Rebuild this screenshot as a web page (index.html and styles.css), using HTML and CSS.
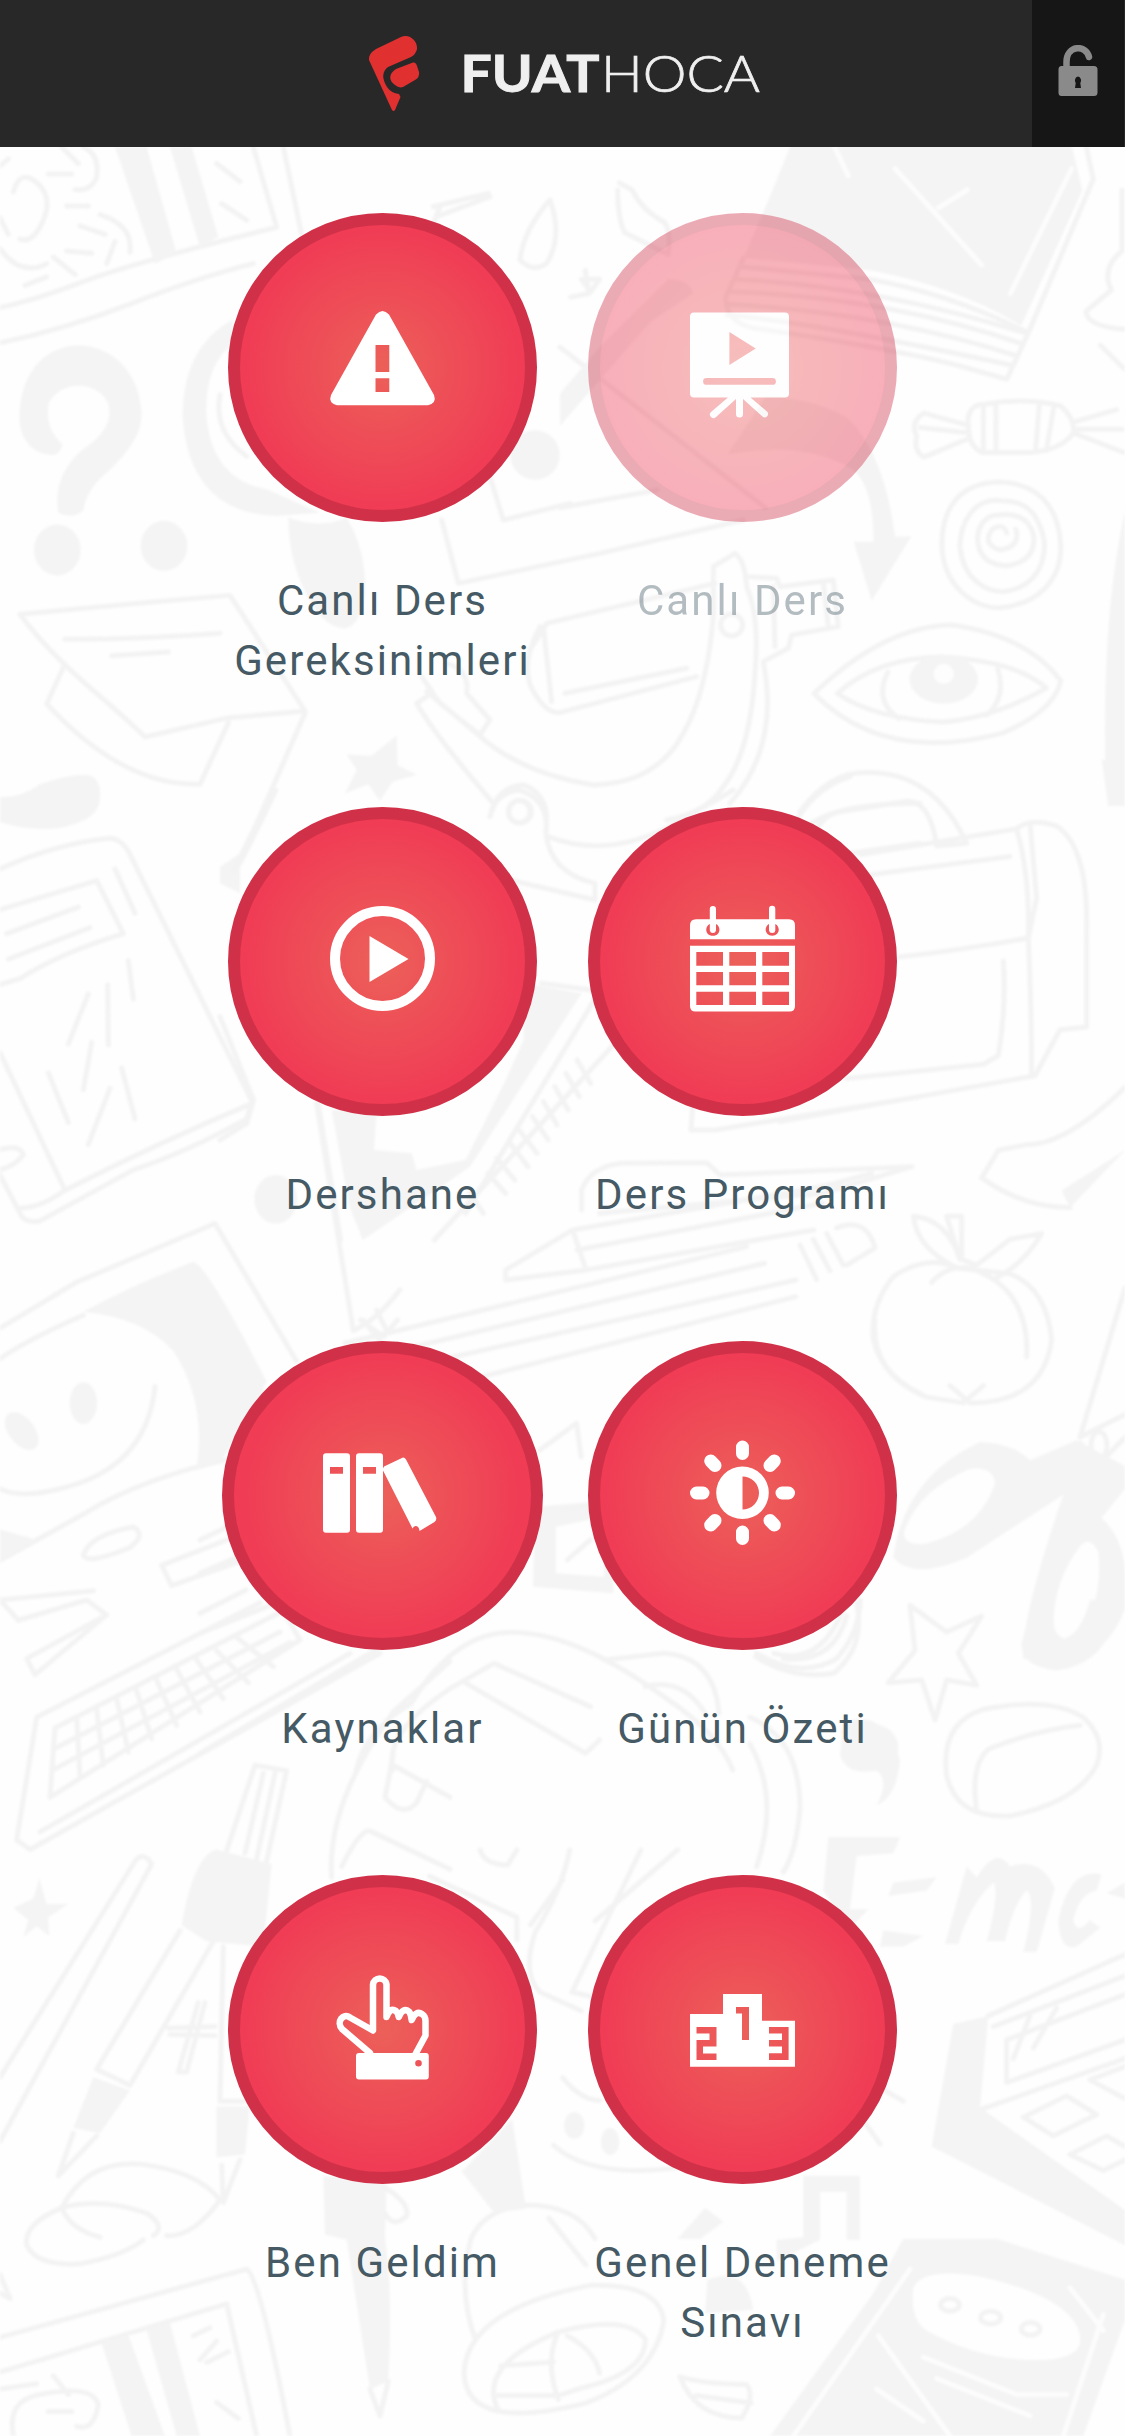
FILE: index.html
```html
<!DOCTYPE html>
<html lang="tr">
<head>
<meta charset="utf-8">
<title>Fuat Hoca</title>
<link rel="stylesheet" href="styles.css">
</head>
<body>
<svg class="doodles" viewBox="0 0 1125 2436" aria-hidden="true">
  <!-- shelf board, question mark, magnifier, paper boat -->
  <g transform="translate(0 140) scale(.3333 .4719)">
    <path d="M0 355Q100 340 250 300T830 185L760 15M850 15L905 200M0 430Q200 400 400 345T760 262M40 110Q60 60 110 90T130 170Q100 220 60 210M250 15Q300 30 290 80Q270 110 225 105M0 165L25 200M0 230Q60 290 140 262M145 72H215M200 140H265M240 182L315 200M200 235L275 240M345 215L320 262M160 248L225 285M75 308L140 290M300 158Q400 180 390 238M185 15L235 50M650 50L720 88M665 135L740 170M0 55L25 40"/>
    <path class="solid" d="M345 15H440L530 240L465 262ZM510 15H575L655 205L600 228Z"/>
    <path class="solid" d="M58 590C60 480 150 435 240 435C350 440 420 500 425 580C425 640 350 685 290 725Q255 755 250 785Q215 805 175 790C160 730 200 680 260 650C320 620 335 590 325 560C300 510 180 505 145 560C140 595 150 620 188 645Q180 665 160 668C90 665 60 630 58 590Z"/>
    <ellipse class="solid" cx="172" cy="869" rx="70" ry="54"/><ellipse class="solid" cx="492" cy="860" rx="70" ry="53"/>
    <path class="solid" d="M700 380Q545 440 548 590Q570 790 830 797L960 790L800 740Q640 720 620 590Q610 480 700 430ZM865 800Q960 825 1040 800Q1100 870 1095 960Q1080 1035 1030 1035Q960 1030 910 950Q865 880 865 800Z"/>
    <path d="M660 540Q640 620 740 670M60 1005L440 980L690 965L915 1210L680 1225L435 1265C330 1190 180 1120 60 1005ZM195 1110L140 1195Q370 1370 600 1365L685 1235M195 1058Q430 1058 660 1045M335 1093L505 1085M915 1215L720 1530"/>
    <path class="solid" d="M0 1392Q60 1395 120 1365Q200 1345 260 1345Q305 1350 300 1395Q280 1445 180 1458Q80 1465 0 1445ZM1040 1302L1115 1305L1190 1262L1193 1325L1250 1345L1178 1360L1140 1400L1105 1365L1035 1385L1070 1335Z"/>
  </g>
  <!-- book stack, brush, candy, lollipop, eye -->
  <g transform="translate(560 190) scale(.3603 .3571)">
    <path class="solid" d="M640 -125H1420L1450 0L1280 380Q1100 270 860 225L510 190L590 0Z"/>
    <path class="light" d="M930 -60L1170 210M1420 -60L1250 290M1050 50L1130 0M760 -125L800 -40"/>
    <path d="M510 190L460 300Q460 380 560 390Q900 440 1100 490L1240 530L1300 400Q1080 290 860 250L500 215M490 250Q880 270 1290 400M475 285Q900 300 1280 430M470 320Q900 345 1270 465M465 350Q700 370 1250 490M1300 400L1480 -30L1460 -125M160 0Q160 80 180 120L300 180Q310 120 290 90Q230 60 200 0L165 -20M0 440L570 890M70 225L80 290L30 300M60 250H110L85 285Z"/>
    <path class="solid" d="M0 660L250 370L370 290Q360 250 300 250L110 440L0 570ZM465 740L570 580Q700 580 800 640Q900 740 930 970H975L865 1150L815 985H870Q870 840 820 790Q700 700 465 740Z"/>
    <path d="M1135 680Q1120 600 1180 600Q1290 580 1390 605Q1430 640 1425 680Q1390 730 1300 735H1170Q1140 720 1135 680ZM1135 660L1010 625Q970 650 990 690Q980 730 1010 748L1135 695M1000 665L1130 680M1425 650L1545 615M1425 680L1565 735M1430 670H1560M1175 605V730M1210 605V730M1330 605L1320 730M1370 610L1350 730"/>
    <path d="M1220 818C1110 820 1060 890 1060 990C1060 1110 1150 1170 1220 1170C1330 1160 1390 1090 1390 1000C1385 880 1320 820 1220 818ZM1225 870C1150 860 1110 930 1110 1000C1120 1090 1180 1125 1230 1125C1310 1115 1345 1060 1345 990C1330 900 1290 870 1225 870ZM1215 910C1170 910 1155 960 1160 990Q1170 1050 1240 1052Q1320 1040 1315 970Q1300 900 1215 910ZM1240 960Q1230 930 1200 950Q1170 990 1220 1008Q1280 1000 1265 950"/>
    <path d="M705 1410Q900 1220 1090 1218Q1300 1250 1390 1375Q1370 1460 1230 1520Q900 1610 705 1410ZM770 1410Q880 1310 1060 1308Q1270 1320 1350 1395Q1200 1480 1060 1490Q870 1480 770 1410ZM910 1350Q870 1430 940 1480M1215 1340Q1240 1420 1185 1470"/>
    <ellipse class="solid" cx="1065" cy="1370" rx="95" ry="68"/><circle class="paper" cx="1065" cy="1355" r="28"/>
    <path d="M0 890L270 840M1560 0V170Q1500 220 1530 280L1460 340Q1460 380 1565 390M1500 435L1565 500"/>
    <path class="solid" d="M1568 900V1678H1515Q1500 1200 1568 900Z"/>
  </g>
  <!-- bag strap and satchel clasp -->
  <g transform="translate(330 520) scale(.3333)">
    <path d="M335 0L385 190L810 100L1240 0M600 390L650 310Q900 250 1155 190M630 320Q560 450 620 530Q660 590 700 575L1100 470M640 320L665 545M705 520L1070 445M1150 195V140L1215 100Q1245 120 1250 200Q1290 290 1275 460Q1260 700 1180 800Q1130 880 1010 900M1150 190V290Q1130 520 1060 640Q980 790 790 795Q570 760 440 640L290 515M290 530L260 550Q310 640 490 850M275 470L330 550L450 645L480 600L410 520Q420 450 350 430M1260 170L1340 175L1350 200L1510 180L1525 320L1385 345L1375 385L1300 425Q1350 680 1200 850M1330 200L1335 380M1480 185L1495 320M480 890Q500 800 580 795Q650 820 650 900M1400 900Q1460 800 1560 770"/>
    <circle cx="1205" cy="315" r="33"/><circle cx="570" cy="875" r="34"/>
    <circle class="solid" cx="615" cy="-195" r="74"/>
    <path d="M480 -130L520 0L720 -50M310 -940L475 -980M310 -890L330 -940M320 -910L480 -970M570 -780Q580 -870 660 -960Q700 -850 650 -770Q610 -740 570 -780"/>
  </g>
  <!-- set square, ruler and pencils -->
  <g transform="translate(220 790) scale(.4464 .3333)">
    <path d="M125 0Q80 130 40 230M610 60Q620 10 670 0Q740 30 730 130Q740 250 840 280V330L650 270M735 140Q870 210 1020 100L1150 0M220 940L270 1350M720 580L830 600M960 650L480 1350M870 560L550 1270M1060 930L1055 1020H1110L1568 920M1310 120Q1360 40 1568 40M0 680L75 930L60 1000L0 1050M1360 200L1568 160"/>
    <path d="M650 1060L690 1130M700 980L735 1050M750 890L780 960M600 1150L640 1210M800 810L830 880M560 1210L590 1270M620 1105L660 1170M670 1020L710 1090M725 935L755 1005M775 850L805 920"/>
    <path d="M810 1260V1200Q830 1130 900 1120L1090 1118L1120 1155L1550 1130L1350 1210L850 1270M640 1440L790 1320L820 1440L640 1470ZM790 1320L1390 1180M820 1440L1330 1320M800 1380L1350 1240M1350 1190L1460 1150"/>
    <path d="M280 1660L1180 1370M310 1710L1220 1420M360 1750L1290 1470M500 1790L1290 1520"/>
    <path class="solid" d="M250 960H420L350 980L345 1080L430 1090L440 1140L550 1110L640 870L680 750V580L810 610L560 1130L320 1350L290 1250Z"/>
    <ellipse class="solid" cx="125" cy="1228" rx="48" ry="73"/><path class="solid" d="M0 230L45 190V310L0 280Z"/>
    <ellipse cx="670" cy="65" rx="24" ry="33"/>
  </g>
  <!-- notebook and computer screen -->
  <g transform="translate(0 800) scale(.3333 .5102)">
    <path class="solid" d="M0 0H300Q290 50 140 55Q60 55 0 42Z"/>
    <path d="M0 135Q170 85 330 75Q360 75 385 100L755 590L740 625Q560 690 400 725L120 825Q70 830 60 810L0 735M755 595Q480 670 195 765L0 495M195 765Q120 800 60 800M0 215L290 158L370 262Q180 300 60 350L0 362M20 262L235 210M25 312L270 250M345 135L405 222M385 315L400 390M265 380L205 478M323 362L325 480M275 475L250 568M145 535L205 632M365 525L405 625M330 565L265 675M0 685Q60 675 70 695Q50 715 0 725M805 0L700 140M0 1035L230 945L645 830L890 1100M0 1095Q90 1055 250 1010M0 1350Q60 1370 180 1350Q440 1310 465 1150M0 1490L250 1400Q420 1330 700 1290M250 1480Q270 1440 400 1425Q440 1440 390 1465Q260 1500 250 1480ZM700 1445L485 1500L515 1540L730 1490M0 1568L280 1550"/>
    <path class="solid" d="M250 1003Q400 950 580 905Q620 910 800 1140L670 1290L590 1310Q620 1180 520 1080Q430 1015 250 1003ZM0 1430L110 1450L0 1490Z"/>
    <circle class="solid" cx="250" cy="1182" r="41"/><ellipse class="solid" cx="65" cy="1237" rx="55" ry="30" transform="rotate(28 65 1237)"/>
    <path d="M950 595L1060 1040Q1130 1020 1200 960M1090 1020L1140 1060M1130 1000L1160 1040"/>
  </g>
  <!-- briefcase, apple, scissors -->
  <g transform="translate(780 760) scale(.3333 .574)">
    <path d="M60 90Q150 20 260 22Q460 20 560 145L470 150Q450 70 380 72L180 90Q130 95 100 130M240 165L710 120Q750 100 830 115Q920 150 920 280V465L840 470L765 550L0 630M270 200L690 168M710 120Q750 200 745 310Q755 430 755 550M750 110L770 240L745 310Q560 330 360 343M670 350Q680 430 655 515L610 530L200 555M1035 570Q860 670 740 670L655 680L605 728Q730 780 870 780M60 845L110 905M100 835L150 890M140 825L190 880M170 815Q260 795 285 850L200 880"/>
    <path d="M530 885Q440 860 340 900Q270 950 280 1010Q310 1080 440 1110L550 1120L610 1090M510 1090L570 1120Q790 1120 815 1010Q800 920 690 895L530 885Q410 850 400 795Q500 800 540 870L500 795H545V870L590 880L690 835L785 825Q730 880 640 905M455 910Q500 880 570 885Q750 920 740 1040M1035 920L900 1180L1035 1140M900 1190L960 1225L1035 1180"/>
    <circle cx="957" cy="1194" r="24"/>
    <path class="solid" fill-rule="evenodd" d="M340 1390Q370 1250 600 1188Q700 1190 750 1220L890 1185L1035 1230V1270L965 1320Q1035 1360 1035 1420V1480Q980 1560 870 1566H730Q720 1500 850 1280L560 1390Q400 1430 340 1390ZM375 1340Q360 1370 440 1365Q600 1340 645 1260Q640 1230 570 1235Q420 1270 375 1340ZM900 1370Q820 1430 820 1510Q840 1540 890 1530Q970 1470 955 1380Q930 1350 900 1370Z"/>
    <path class="solid" d="M845 750L1035 680L870 780ZM965 0H1035V80H985Z"/>
  </g>
  <!-- envelope, ruler and backpack -->
  <g transform="translate(200 1320) scale(.4592 .3333)">
    <path d="M350 0L400 50L430 0M1470 0Q1460 150 1568 220M0 660L60 620M0 760L100 700M0 880L100 810M0 940L200 830M0 1300L420 960M340 1350Q360 1230 460 1150Q560 920 700 938Q830 950 1010 1130Q1130 1240 1160 1350M420 1350Q400 1240 540 1110L640 1030L850 1160M580 1090L840 1300L870 1260M880 1020L1010 1000Q1120 1010 1130 1180M970 1100Q1050 1070 1100 1180M1210 1010Q1290 1080 1380 1060Q1450 980 1430 850M1250 1000Q1350 1040 1400 870"/>
    <path class="solid" fill-rule="evenodd" d="M730 560L900 540V820L725 800ZM775 620V760L880 770V590Z"/>
    <path d="M740 390L820 310L830 410M800 720L850 660M790 570L880 550"/>
    <path class="solid" d="M0 0H60L200 370L60 310L0 430ZM1395 1230Q1500 1180 1520 1270V1350H1420Z"/>
  </g>
  <!-- keyboard, star, compass, spoons -->
  <g transform="translate(0 1600) scale(.3333 .5332)">
    <path d="M0 0L55 38L260 0L320 28L105 140L80 110L320 28M110 220L50 450L90 468L1140 100M110 220L780 5M120 435L1050 100M165 240L150 370L900 75L850 20ZM230 220L240 330M290 205L310 310M350 185L385 285M410 170L455 260M470 150L530 235M530 130L600 210M590 112L670 185M650 95L745 155M710 70L820 125M160 280L840 60M155 320L870 80"/>
    <path class="solid" d="M40 577L100 560L118 522L140 570L205 570L145 595L148 630L110 612L70 632L85 600Z"/>
    <path d="M0 895L405 490Q430 470 455 495L390 570L0 1015M765 310L680 470M860 320L800 490M765 310L860 320M790 325L735 475M825 325L770 485M540 620L290 880L390 910L640 640M670 650L660 940H730M220 1000L175 1080L290 1005M665 1060L670 1130L720 1050M185 1140Q260 1050 420 1058Q590 1070 660 1125Q580 1195 500 1192M185 1140Q70 1170 80 1210Q110 1250 240 1245Q370 1230 430 1200M185 1140Q300 1120 440 1150Q500 1175 460 1192M185 1140Q210 1180 300 1195M595 755L535 885L560 885L615 755M505 803L645 800M510 815L645 817"/>
    <path class="solid" d="M545 610Q580 480 650 468L815 495L790 650L620 640ZM280 895L390 920L300 1000L220 990ZM650 950H750L735 1040L650 1045ZM970 1080L1160 1095L1155 1195Q1180 1300 1165 1465L1110 1480L1040 1200L975 1190Z"/>
    <path d="M1110 1480L1140 1530L1165 1465M1150 1100Q1230 1130 1220 1155Q1180 1180 1155 1150M0 1265L30 1310L0 1300M0 1383L740 1255Q780 1270 870 1568M0 1448L680 1320L770 1568M0 1480L110 1470M40 1568Q20 1500 120 1490Q280 1470 295 1510Q280 1560 230 1550M145 1522H215M160 1455L205 1490M580 1380L630 1365M650 1390L600 1425M620 1430L685 1410M650 1505L715 1535M995 520Q980 380 1180 210L1350 115M1025 500Q1080 430 1110 433L1350 505M1180 290L1155 370Q1210 410 1250 380L1280 340M1180 310L1350 370"/>
    <path class="solid" d="M305 1395L385 1378L495 1568H395ZM440 1370L510 1355L600 1568H530Z"/>
  </g>
  <!-- formula, eraser, laptop, calculator -->
  <g transform="translate(750 1600) scale(.3333 .5332)">
    <path d="M480 10L590 60L695 30L625 100L680 160L590 150L555 225L515 150L415 155L495 95ZM20 100Q150 150 260 110Q330 60 330 0M100 110Q250 120 290 30M590 330Q570 230 700 205Q900 180 1000 220Q1070 260 1040 310Q980 380 780 405Q620 410 590 330ZM680 395Q660 310 715 280Q850 245 990 235M0 220Q150 260 150 390Q140 470 100 510M0 270Q90 370 20 500"/>
    <path class="solid" fill-rule="evenodd" d="M850 0H1110Q1080 120 920 132Q810 125 815 80ZM915 0Q900 50 930 75Q990 70 1020 0ZM280 230Q400 200 450 300Q440 370 380 385Q420 340 380 320Q290 330 270 290ZM235 445H450L430 475L320 480L300 580H355L310 610Q260 590 220 545ZM430 530L560 520L530 545L415 555ZM400 620L520 630L460 650L390 650ZM585 645L650 500L680 520Q740 460 780 500Q870 480 915 540L860 660L820 660Q860 560 830 545Q790 570 765 640H710Q750 550 730 530Q660 570 625 645ZM1055 515Q960 500 925 600Q930 660 980 650L1050 615L1020 600Q980 630 970 600Q990 550 1040 545ZM1070 550L1125 530V560Z"/>
    <path d="M715 780L1125 665M730 800L1125 705M770 825V905L1125 825M770 825L1125 740M695 955L1125 860M695 960L1125 1150M820 970L950 930L1040 965L910 1005ZM1020 900L1125 935M1020 900L1125 875M960 1040L1070 1005L1125 1025M960 1040L1060 1070L1125 1050M840 780L790 860M920 765L850 840M350 900L460 940M310 950L390 1020"/>
    <path class="solid" d="M610 795L715 780L690 955L1125 1150V1210L545 1025ZM160 1080H330V1200H290V1110H210V1200L80 1240V1200L160 1195Z"/>
    <path class="solid" fill-rule="evenodd" d="M460 1198H740L1125 1275V1350L1000 1568H60L370 1300ZM490 1290Q480 1350 530 1370Q700 1430 890 1425Q1000 1420 990 1380Q970 1310 700 1270Q520 1250 490 1290Z"/>
    <path class="light" d="M480 1255L130 1568M385 1380L600 1568M1060 1340L940 1568M960 1290L1060 1370M380 1480L520 1540M520 1420L800 1490L950 1490M560 1460L840 1530"/>
    <ellipse cx="600" cy="1322" rx="28" ry="12"/><ellipse cx="722" cy="1346" rx="30" ry="12"/><ellipse cx="842" cy="1367" rx="28" ry="12"/>
  </g>
  <!-- pen, thimble, drops around the last row -->
  <g transform="translate(200 1850) scale(.4592 .3737)">
    <path d="M610 0Q620 40 670 40L690 0M500 70L690 180V240M790 80L720 200M805 0Q790 100 730 220Q700 330 740 380L830 430M960 0L810 380L880 400M1040 0L860 190M590 1040Q620 960 710 950Q820 950 860 1040M590 1040Q560 1180 600 1310M760 985L840 1110M575 1400Q580 1230 850 1165Q1000 1160 1010 1260Q990 1410 840 1480Q580 1560 575 1400ZM650 1500Q600 1380 780 1290Q930 1240 970 1310Q970 1400 830 1440L780 1460H650M655 1380L770 1370M780 1290Q750 1370 780 1470M800 1300Q860 1340 870 1400M1045 1410Q1080 1520 1180 1520Q1210 1460 1190 1430Q1100 1430 1045 1410ZM1080 1460L1200 1480M770 790Q850 880 1040 850M790 610Q830 670 870 670"/>
    <path class="solid" d="M570 860L680 720L710 960L640 970ZM1100 958L1140 995L1090 1040H1040ZM1105 1150Q1190 1110 1205 1230L1100 1240Z"/>
    <ellipse class="solid" cx="815" cy="737" rx="22" ry="36"/><ellipse class="solid" cx="893" cy="780" rx="20" ry="36"/>
  </g>
</svg>

<header class="topbar">
  <a class="brand" href="#" aria-label="Fuat Hoca">
    <svg width="392" height="80" viewBox="368 34 392 80">
      <path fill="#e03130" d="M369 60Q368 54 376 49L401 37C409 33 418 41 417 49Q416 54 411 57L388 67Q379 74 387 87Q391 93 399 94L400.500 97L395 110Q393.500 112 392 110Z"/>
      <path fill="#e03130" d="M396 69L413 62.500Q416 62 417 66L419 72Q420 77 415 80L403 87Q399 88.500 395 85C389 81 388 74 396 69Z"/>
      <text class="brand-bold" x="460.500" y="91.500" textLength="139" lengthAdjust="spacingAndGlyphs">FUAT</text>
      <text class="brand-thin" x="601" y="91.500" textLength="159" lengthAdjust="spacingAndGlyphs">HOCA</text>
    </svg>
  </a>
  <a class="login" href="#" aria-label="Giriş">
    <svg width="40" height="52" viewBox="0 0 40 52">
      <path d="M8.500 24V17C8.500 0 28 -1 31 12" fill="none" stroke="#8a8a8a" stroke-width="6.500" stroke-linecap="round"/>
      <path fill="#8a8a8a" fill-rule="evenodd" d="M3.500 21H36Q39.500 21 39.500 24.500V47.500Q39.500 51 36 51H3.500Q.5 51 .5 47.500V24.500Q.5 21 3.500 21ZM20 31.500A3.500 4 0 0 0 17.700 38L17 43H23L22.300 38A3.500 4 0 0 0 20 31.500Z"/>
    </svg>
  </a>
</header>

<main class="menu">
  <a class="item" href="#">
    <span class="disc"><svg class="icon" viewBox="0 0 105 105"><path fill-rule="evenodd" d="M46 2.500Q52.500 -4.500 59 2.500L104 83Q107 91 98 93.300H7Q-2 91 1 83ZM45.500 33V60H59.300V33ZM45.500 66.300V80H59.300V66.300Z"/></svg></span>
    <span class="label">Canlı Ders Gereksinimleri</span>
  </a>
  <a class="item disabled" href="#">
    <span class="disc"><svg class="icon" viewBox="0 0 105 105"><path fill-rule="evenodd" d="M4 .5H95Q99 .5 99 4.500V81.500Q99 85.500 95 85.500H60.500L77.500 100A3.500 3.500 0 0 1 73 105L53 87V102A3.500 3.500 0 0 1 46 102V87L26 105A3.500 3.500 0 0 1 21 100L38 85.500H4Q0 85.500 0 81.500V4.500Q0 .5 4 .5ZM39.400 20V53L65.700 36.500ZM16.500 66A3.400 3.400 0 0 0 16.500 72.800H82.500A3.400 3.400 0 0 0 82.500 66Z"/></svg></span>
    <span class="label">Canlı Ders</span>
  </a>
  <a class="item" href="#">
    <span class="disc"><svg class="icon" viewBox="0 0 105 105"><circle cx="52.500" cy="52.500" r="47.500" fill="none" stroke="#fff" stroke-width="10"/><path d="M39.500 30L78.500 53L39.500 76Z"/></svg></span>
    <span class="label">Dershane</span>
  </a>
  <a class="item" href="#">
    <span class="disc"><svg class="icon" viewBox="0 0 105 105"><path fill-rule="evenodd" d="M6 13.300H19.800V3A3.100 3.100 0 0 1 26 3V13.300H79V3A3.100 3.100 0 0 1 85.300 3V13.300H99Q105 13.300 105 19.300V33.300H0V19.300Q0 13.300 6 13.300ZM19.800 18C14 21 15.500 29.800 22.900 29.800S31.500 21 26 18V24.500Q25.500 27 22.900 27T19.800 24.500ZM79 18C73.500 21 75 29.800 82.200 29.800S91 21 85.300 18V24.500Q85 27 82.200 27T79 24.500ZM0 39.700H105V100Q105 105.500 99.500 105.500H5.500Q0 105.500 0 100ZM6.300 46V59.700H33V46ZM39.300 46V59.700H66V46ZM72.300 46V59.700H99V46ZM6.300 66V79.300H33V66ZM39.300 66V79.300H66V66ZM72.300 66V79.300H99V66ZM6.300 85.700V99H33V85.700ZM39.300 85.700V99H66V85.700ZM72.300 85.700V99H99V85.700Z"/></svg></span>
    <span class="label">Ders Programı</span>
  </a>
  <a class="item" href="#">
    <span class="disc disc-wide"><svg class="icon icon-wide" viewBox="0 0 117 105"><path fill-rule="evenodd" d="M2 13.300H23Q26 13.300 26 16.500V89.500Q26 92.700 23 92.700H2Q-1 92.700 -1 89.500V16.500Q-1 13.300 2 13.300ZM6 27V33.700H19V27ZM35 13.300H56Q59 13.300 59 16.500V89.500Q59 92.700 56 92.700H35Q32 92.700 32 89.500V16.500Q32 13.300 35 13.300ZM39 27V33.700H52V27Z"/><path d="M58.500 29.500L60 26.500L79 17.500Q81 17.500 82 19.500L112 77Q113 80 110.500 82L95.500 91Q95 86 91.500 86Q89.500 86 88.500 88.500Z"/></svg></span>
    <span class="label">Kaynaklar</span>
  </a>
  <a class="item" href="#">
    <span class="disc"><svg class="icon" viewBox="0 0 105 105"><path fill-rule="evenodd" d="M52.500 26.500A26.300 26.300 0 0 1 52.500 79.100A26.300 26.300 0 0 1 52.500 26.500ZM52.500 36.500V69.500A16.500 16.500 0 0 0 52.500 36.500Z"/><path fill="none" stroke="#fff" stroke-width="13" stroke-linecap="round" d="M52.500 7V13.500M52.500 92V98.500M6.500 53H13M92 53H98.500M20.700 21L25 25.500M84.300 21L80 25.500M20.700 85L25 80.500M84.300 85L80 80.500"/></svg></span>
    <span class="label">Günün Özeti</span>
  </a>
  <a class="item" href="#">
    <span class="disc"><svg class="icon" viewBox="0 0 105 105"><path fill-rule="evenodd" d="M29 79H96Q98.800 79 98.800 82V102.500Q98.800 105.500 96 105.500H29Q26 105.500 26 102.500V82Q26 79 29 79ZM88.500 86A3.300 3.300 0 0 0 88.500 92.600A3.300 3.300 0 0 0 88.500 86Z"/><path fill="none" stroke="#fff" stroke-width="6.500" stroke-linejoin="round" stroke-linecap="round" d="M40 79L12 55C6 48 13 38.500 20 43.500L43 56.500V10.500A6.800 6.800 0 0 1 56.500 10.500V43Q60 33 66 37Q68 39 68.800 43Q73 33 79 37.500Q81 40 81.700 46Q86 36 92 40Q95.500 42 95.500 47V61.500L85.500 80"/></svg></span>
    <span class="label">Ben Geldim</span>
  </a>
  <a class="item" href="#">
    <span class="disc"><svg class="icon" viewBox="0 0 105 105"><path fill-rule="evenodd" d="M0 40H33V20H72V46.700H105V92.700H0ZM46 33V39.500H52V66H59V33ZM6.500 53V59.500H19.500V66H6.500V86H26.500V79.500H13V72.500H26.500V53ZM79 53V59.500H92V66H79V72.500H92V79.300H79V86H98.600V53Z"/></svg></span>
    <span class="label">Genel Deneme Sınavı</span>
  </a>
</main>
</body>
</html>
```
FILE: styles.css
```css
* { box-sizing: border-box; }
body {
  position: relative;
  margin: 0;
  width: 1125px;
  height: 2436px;
  overflow: hidden;
  background: #fefefe;
  font-family: Roboto, "Liberation Sans", sans-serif;
}
a { text-decoration: none; color: inherit; }

/* Hand-drawn school pattern behind the page */
.doodles {
  position: absolute;
  inset: 0;
  z-index: -1;
  width: 1125px;
  height: 2436px;
  fill: none;
  stroke: #f3f3f3;
  stroke-width: 5;
  stroke-linejoin: round;
  stroke-linecap: round;
  filter: blur(1px);
}
.doodles path, .doodles circle, .doodles ellipse { vector-effect: non-scaling-stroke; }
.doodles .solid { fill: #f4f4f4; stroke: none; }
.doodles .light { stroke: #fcfcfc; }
.doodles .paper { fill: #fdfdfd; stroke: none; }

.topbar {
  display: grid;
  grid-template-columns: 1fr 92px;
  height: 147px;
  padding-right: 1px;
  background: #282828;
}
.brand {
  display: flex;
  align-items: center;
  padding-left: 368px;
}
.brand svg { display: block; overflow: visible; }
.brand text { font-family: Lato, sans-serif; font-size: 52px; fill: #efefef; stroke: #efefef; }
.brand .brand-bold { font-weight: 700; stroke-width: 1; }
.brand .brand-thin { font-weight: 300; stroke-width: .7; }
.login {
  display: flex;
  align-items: center;
  justify-content: center;
  padding-bottom: 6px;
  background: #161616;
}

.menu {
  display: grid;
  grid-template-columns: 360px 360px;
  justify-content: center;
  row-gap: 116px;
  padding-top: 66px;
}
.item {
  display: flex;
  flex-direction: column;
  align-items: center;
  gap: 49px;
}
.item.disabled { opacity: .4; }
.disc {
  display: flex;
  justify-content: center;
  width: 309px;
  height: 309px;
  padding-top: 87px;
  border: 12px solid #d13148;
  border-radius: 50%;
  background: radial-gradient(circle, #ec6059 0, #f03c55 140px);
}
.disc-wide { width: 321px; }
.icon { width: 105px; height: 105px; overflow: visible; fill: #fff; }
.icon-wide { width: 117px; }
.label {
  width: 310px;
  color: #455a64;
  font-size: 42px;
  line-height: 60px;
  letter-spacing: 2.1px;
  text-align: center;
}
```
